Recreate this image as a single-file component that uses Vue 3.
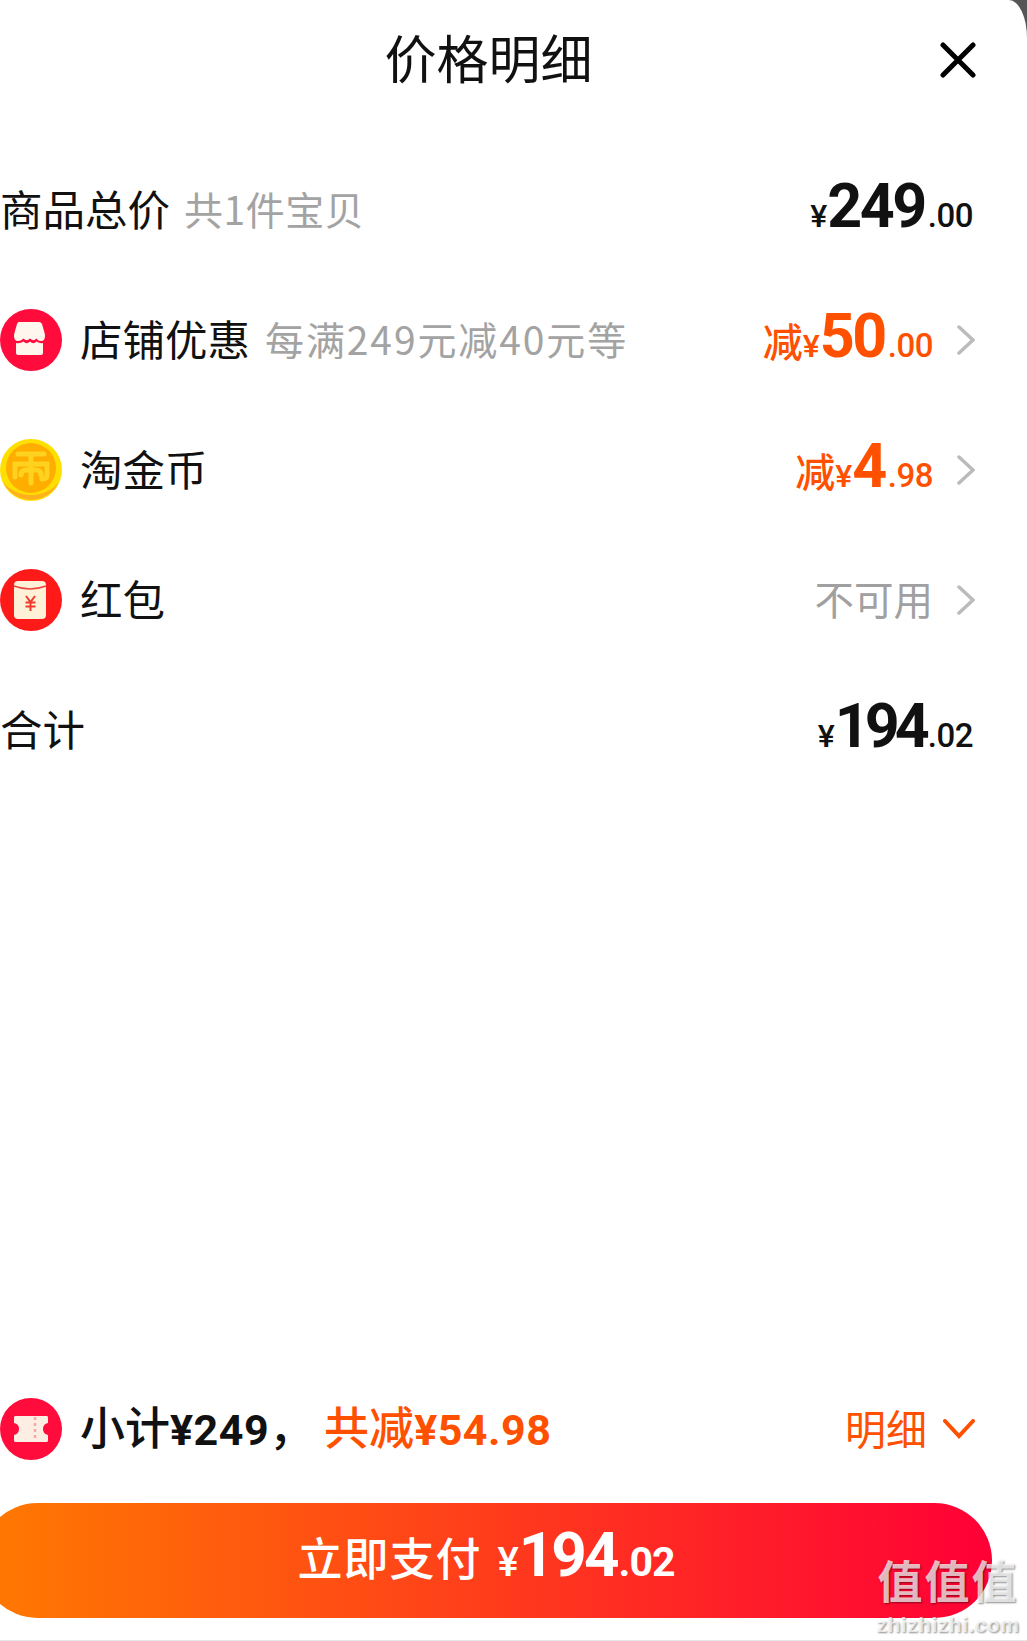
<script setup>
const rows = [
  { id: 'shop', label: '店铺优惠', note: '每满249元减40元等', prefix: '减', big: '50', small: '.00' },
  { id: 'coin', label: '淘金币', note: '', prefix: '减', big: '4', small: '.98' },
  { id: 'packet', label: '红包', note: '', off: '不可用' }
]
</script>

<template>
  <div class="page">
    <div class="sheet">
      <header class="head">
        <h1 class="title">价格明细</h1>
        <svg class="close" viewBox="0 0 36 36">
          <path d="M3 3 L33 33 M33 3 L3 33" />
        </svg>
      </header>

      <section class="row">
        <span class="label">商品总价</span>
        <span class="note">共1件宝贝</span>
        <span class="price dark">
          <i class="yen">¥</i><b class="big">249</b><i class="small">.00</i>
        </span>
      </section>

      <section v-for="row in rows" :key="row.id" class="row">
        <svg class="badge" viewBox="0 0 62 62">
          <template v-if="row.id === 'shop'">
            <circle cx="31" cy="31" r="31" fill="#ff0b3c" />
            <path d="M19 13 H39 Q41 13 42 15 L44 22 Q45 25 45 27 Q45 32 41 32 Q38 32 36.500 29.500 Q33.500 33 30 29.500 Q26.500 33 23.500 29.500 Q21 32 18 32 Q14 32 14 27 Q14 25 15 22 L17 15 Q17.500 13 19 13 Z" fill="#fff6ee" />
            <path d="M16 34 Q20 35 23.500 32.500 Q26.500 36 30 32.500 Q33.500 36 36.500 32.500 Q40 35 43 34 V44 Q43 46 41 46 H18 Q16 46 16 44 Z" fill="#fff6ee" />
          </template>
          <template v-else-if="row.id === 'coin'">
            <circle cx="31" cy="31" r="31" fill="#ffdf00" />
            <path d="M3 43 A31 31 0 0 0 59 43 A34 30 0 0 1 3 43 Z" fill="#ffb01e" />
            <circle cx="31" cy="29" r="25" fill="#ffae00" />
            <path d="M18 15 H44 M31 15 V44 M15 38 V25 H47 V36 Q47 40 42 40 M21 36 Q21 31 26 31 H36 Q41 31 41 36" fill="none" stroke="#ffd21f" stroke-width="5" stroke-linecap="round" />
          </template>
          <template v-else>
            <circle cx="31" cy="31" r="31" fill="#ff1a1a" />
            <rect x="14" y="12" width="32" height="38" rx="4" fill="#fff0d8" />
            <path d="M14 17 Q30 23 46 17" fill="none" stroke="#f0413a" stroke-width="1.500" />
            <path d="M26 27 L30.500 33 L35 27 M30.500 33 V42 M25.500 33.500 H35.500 M25.500 37.500 H35.500" fill="none" stroke="#f03a2c" stroke-width="2" />
          </template>
        </svg>
        <span class="label">{{ row.label }}</span>
        <span v-if="row.note" class="note wide">{{ row.note }}</span>
        <span v-if="row.off" class="price off">{{ row.off }}</span>
        <span v-else class="price hot">
          <em class="cut">{{ row.prefix }}</em><i class="yen">¥</i><b class="big">{{ row.big }}</b><i class="small">{{ row.small }}</i>
        </span>
        <svg class="chevron" viewBox="0 0 18 30">
          <path d="M2 2 L16 15 L2 28" />
        </svg>
      </section>

      <section class="row">
        <span class="label">合计</span>
        <span class="price dark">
          <i class="yen">¥</i><b class="big tight">194</b><i class="small">.02</i>
        </span>
      </section>

      <div class="spacer"></div>

      <section class="summary">
        <svg class="badge" viewBox="0 0 62 62">
          <circle cx="31" cy="31" r="31" fill="#ff0b3c" />
          <path d="M15 18 H47 Q48 18 48 20 V25 Q43 26 43 31 Q43 36 48 37 V42 Q48 44 47 44 H15 Q14 44 14 42 V37 Q19 36 19 31 Q19 26 14 25 V20 Q14 18 15 18 Z" fill="#fdeee4" />
          <path d="M35 19 V43" stroke="#f7a8a8" stroke-width="2.500" stroke-dasharray="3 3" />
        </svg>
        <span class="sub-total">小计<b>¥249</b>，</span>
        <span class="saved">共减<b>¥54.98</b></span>
        <span class="detail">明细</span>
        <svg class="arrow" viewBox="0 0 32 20">
          <path d="M2 2 L16 17 L30 2" />
        </svg>
      </section>

      <button class="pay">
        <span class="pay-text">立即支付</span>
        <i class="pay-yen">¥</i><b class="pay-big">194</b><i class="pay-small">.02</i>
      </button>

      <div class="rule"></div>

      <div class="mark">
        <div class="mark-cn">值值值</div>
        <div class="mark-en">zhizhizhi.com</div>
      </div>
    </div>
  </div>
</template>

<style scoped>
.page {
  width: 1027px;
  height: 1641px;
  background: #555;
  overflow: hidden;
}
.sheet {
  position: relative;
  height: 1641px;
  display: flex;
  flex-direction: column;
  background: #fff;
  border-top-right-radius: 18px 38px;
  overflow: hidden;
  font-family: "Noto Sans CJK SC", "Liberation Sans", sans-serif;
  color: #111;
}
.head {
  height: 145px;
  flex: none;
  position: relative;
}
.title {
  margin: 0;
  padding-top: 20px;
  text-align: center;
  font-size: 52px;
  line-height: 74px;
  font-weight: 400;
  color: #111;
  transform: translateX(-25px);
}
.close {
  position: absolute;
  right: 51px;
  top: 42px;
  width: 36px;
  height: 36px;
  fill: none;
  stroke: #000;
  stroke-width: 5;
  stroke-linecap: round;
}
.row {
  height: 130px;
  flex: none;
  display: flex;
  align-items: center;
  padding-right: 52px;
}
.badge {
  width: 62px;
  height: 62px;
  flex: none;
  margin-right: 18px;
}
.label {
  padding-bottom: 6px;
  font-size: 42.500px;
  color: #111;
}
.note {
  padding-bottom: 4px;
  margin-left: 14px;
  font-size: 39px;
  letter-spacing: 0.500px;
  color: #a3a3a3;
}
.wide {
  margin-left: 15px;
  letter-spacing: 1.900px;
}
.price {
  margin-left: auto;
  padding-bottom: 8px;
  display: flex;
  align-items: baseline;
  font-family: Roboto, "Noto Sans CJK SC", sans-serif;
}
.price i,
.price em {
  font-style: normal;
}
.dark {
  color: #111;
  margin-right: 2px;
}
.hot {
  color: #ff5000;
}
.off {
  padding-bottom: 6px;
  color: #a0a0a0;
  font-family: "Noto Sans CJK SC", sans-serif;
  font-size: 39.500px;
}
.cut {
  font-size: 40px;
  font-weight: 500;
  font-family: "Noto Sans CJK SC", sans-serif;
}
.yen {
  font-size: 32px;
  font-weight: 500;
}
.big {
  font-size: 61px;
  font-weight: 700;
  letter-spacing: -2.500px;
}
.tight {
  letter-spacing: -5px;
}
.small {
  margin-left: 3px;
  font-size: 33px;
  font-weight: 500;
  letter-spacing: -0.500px;
}
.chevron {
  width: 18px;
  height: 30px;
  flex: none;
  margin-left: 24px;
  fill: none;
  stroke: #bbb;
  stroke-width: 3.500;
  stroke-linecap: round;
}
.spacer {
  flex: 1;
}
.summary {
  height: 62px;
  flex: none;
  display: flex;
  align-items: center;
  padding-right: 52px;
  margin-bottom: 42px;
  transform: translateY(-1px);
}
.sub-total {
  padding-bottom: 7px;
  font-size: 45px;
  font-weight: 500;
}
.sub-total b,
.saved b {
  font-family: Roboto, sans-serif;
  font-weight: 700;
  font-size: 43px;
  letter-spacing: 0.500px;
}
.saved {
  padding-bottom: 7px;
  margin-left: 10px;
  font-size: 45px;
  font-weight: 500;
  color: #ff5000;
}
.detail {
  padding-bottom: 5px;
  margin-left: auto;
  font-size: 41px;
  color: #ff5000;
}
.arrow {
  width: 32px;
  height: 20px;
  margin-left: 16px;
  flex: none;
  fill: none;
  stroke: #ff5000;
  stroke-width: 4;
  stroke-linecap: round;
}
.pay {
  height: 115px;
  flex: none;
  width: 1012px;
  margin: 0 0 23px -20px;
  padding: 0 0 11px;
  border: 0;
  border-radius: 58px;
  background: linear-gradient(90deg, #ff7a00, #ff0036);
  color: #fff;
  display: flex;
  align-items: baseline;
  justify-content: center;
  line-height: 104px;
  font-family: Roboto, "Noto Sans CJK SC", sans-serif;
}
.pay i {
  font-style: normal;
}
.pay-text {
  font-family: "Noto Sans CJK SC", sans-serif;
  font-size: 45px;
  font-weight: 500;
  letter-spacing: 1px;
  margin-right: 16px;
}
.pay-yen {
  font-size: 40px;
  font-weight: 500;
}
.pay-big {
  font-size: 62px;
  font-weight: 700;
  letter-spacing: -3px;
}
.pay-small {
  margin-left: 2px;
  font-size: 41px;
  font-weight: 700;
  letter-spacing: -1px;
}
.rule {
  position: absolute;
  left: 0;
  right: 0;
  bottom: 0;
  height: 1px;
  background: #e6e6e6;
}
.mark {
  position: absolute;
  left: 874px;
  top: 1547px;
  width: 148px;
  text-align: center;
  color: rgba(255, 255, 255, 0.72);
  text-shadow: 1px 1px 2px rgba(0, 0, 0, 0.45);
  font-weight: 700;
}
.mark-cn {
  font-size: 45px;
  line-height: 66px;
  letter-spacing: 2px;
}
.mark-en {
  font-family: "Liberation Sans", sans-serif;
  font-size: 21px;
  line-height: 24px;
  letter-spacing: 0.500px;
}
</style>
